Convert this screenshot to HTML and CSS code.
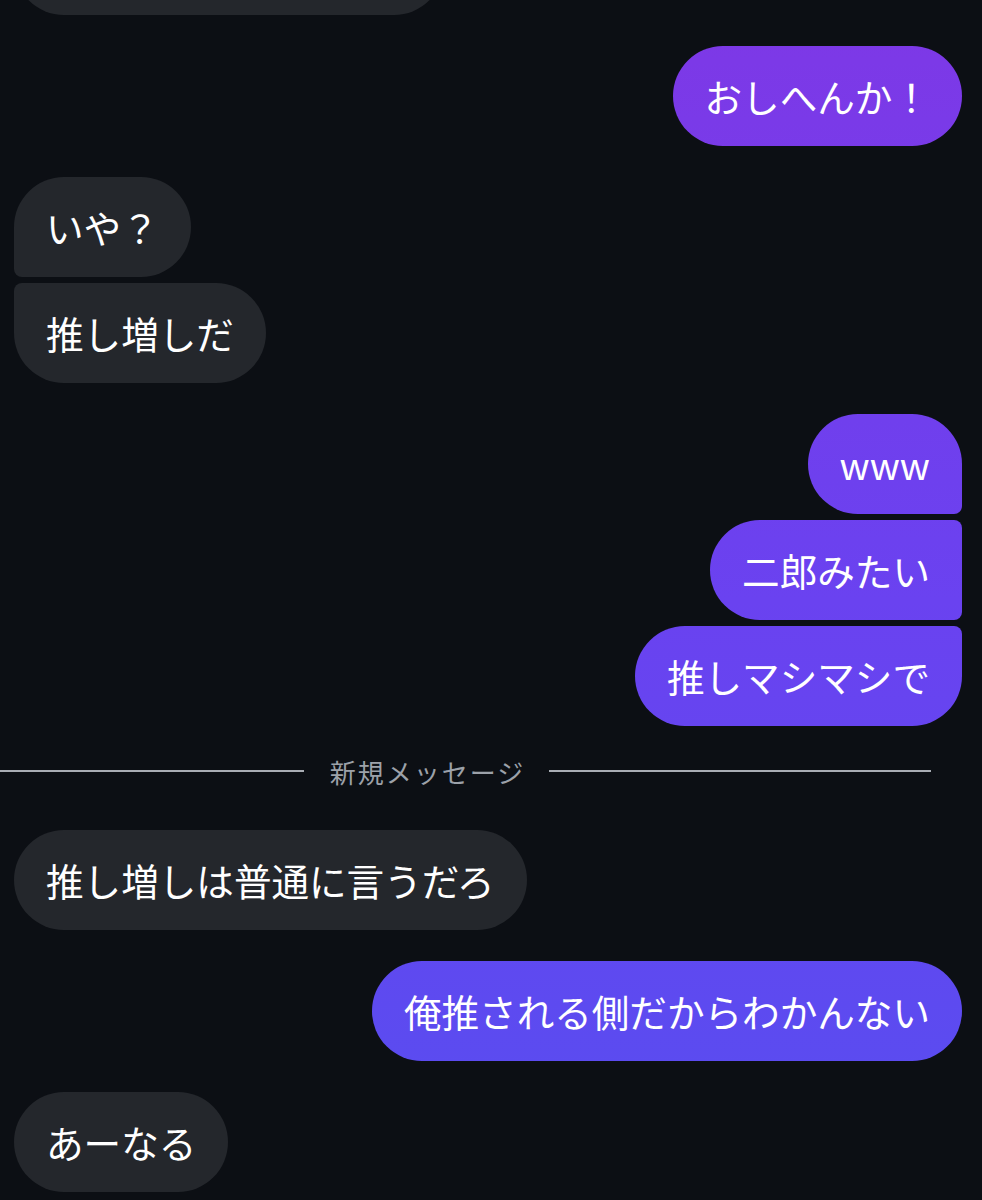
FILE: index.html
```html
<!DOCTYPE html>
<html lang="ja">
<head>
    <meta charset="UTF-8">
    <meta name="viewport" content="width=device-width, initial-scale=1.0">
    <title>メッセージ</title>
    <link rel="stylesheet" href="styles.css">
</head>
<body>
    <div class="chat">
        <div class="group in">
            <div class="bubble cut"></div>
        </div>

        <div class="group out">
            <div class="bubble">おしへんか！</div>
        </div>

        <div class="group in">
            <div class="bubble">いや？</div>
            <div class="bubble">推し増しだ</div>
        </div>

        <div class="group out">
            <div class="bubble">www</div>
            <div class="bubble">二郎みたい</div>
            <div class="bubble">推しマシマシで</div>
        </div>

        <div class="divider">
            <span class="line"></span>
            <span class="label">新規メッセージ</span>
            <span class="line"></span>
        </div>

        <div class="group in">
            <div class="bubble">推し増しは普通に言うだろ</div>
        </div>

        <div class="group out">
            <div class="bubble">俺推される側だからわかんない</div>
        </div>

        <div class="group in">
            <div class="bubble">あーなる</div>
        </div>
    </div>
</body>
</html>
```

FILE: styles.css
```css
body {
    margin: 0;
    padding: 0;
    background-color: #0c0f14;
    color: #fff;
    font-family: "Noto Sans CJK JP", "Noto Sans", sans-serif;
    overflow: hidden;
}

.chat {
    display: flex;
    flex-direction: column;
    gap: 31px;
    padding: 0 20px 0 14px;
    margin-top: -85px;
}

.group {
    display: flex;
    flex-direction: column;
    gap: 6px;
}

.in {
    align-items: flex-start;
}

.out {
    align-items: flex-end;
}

.bubble {
    box-sizing: border-box;
    display: flex;
    align-items: center;
    height: 100px;
    padding: 0 32px;
    font-size: 37.6px;
    line-height: 36px;
    border-radius: 50px;
    white-space: nowrap;
}

.in .bubble {
    background-color: #24272c;
}

.out .bubble {
    background: linear-gradient(180deg, #7e38e6 0px, #6a42f0 600px, #5a4cf0 1100px) fixed;
}

.bubble.cut {
    width: 430px;
}

/* grouped corners */
.in .bubble:not(:last-child) {
    border-bottom-left-radius: 8px;
}
.in .bubble:not(:first-child) {
    border-top-left-radius: 8px;
}
.out .bubble:not(:last-child) {
    border-bottom-right-radius: 8px;
}
.out .bubble:not(:first-child) {
    border-top-right-radius: 8px;
}

.divider {
    display: flex;
    align-items: center;
    gap: 26px;
    height: 40px;
    margin: -6px 31px 8px -92px;
}

.divider .line {
    flex: 1;
    height: 2px;
    background-color: #a9adb4;
}

.divider .label {
    font-size: 26px;
    color: #9ca1a9;
    letter-spacing: 2px;
    margin-right: -2px;
}
```
